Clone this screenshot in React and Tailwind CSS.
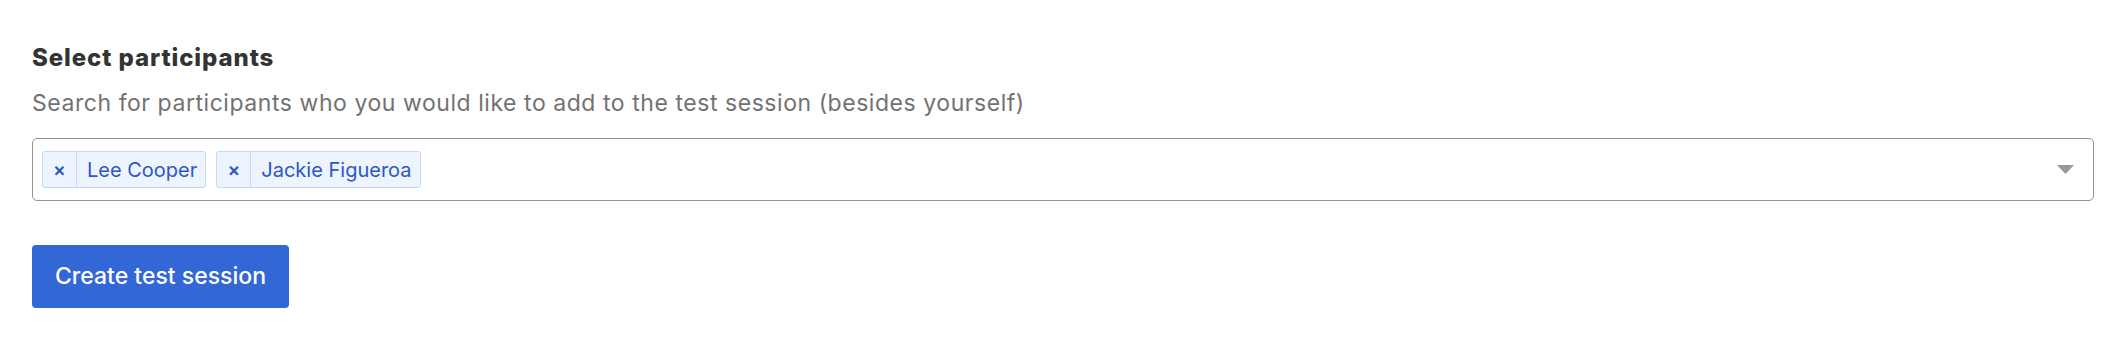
import React from 'react'

const participants = ['Lee Cooper', 'Jackie Figueroa']

function Chip({ name }) {
  return (
    <div className="flex h-[37px] items-stretch rounded-[3px] border border-[#c5d8f6] bg-[#eef4fe] text-[#2c57c4]">
      <button className="flex w-[34px] items-center justify-center border-r border-[#c5d8f6] text-[19px] font-semibold leading-none">
        ×
      </button>
      <span className="flex items-center pl-[10px] pr-[8px] text-[20px]">{name}</span>
    </div>
  )
}

export default function App() {
  return (
    <div className="min-h-[340px] bg-white px-[32px] pt-[44px] font-['Inter',sans-serif]">
      <h2 className="text-[24px] font-extrabold leading-[28px] tracking-[0.9px] text-[#333333]">Select participants</h2>
      <p className="mt-[17px] text-[23px] leading-[28px] tracking-[0.55px] text-[#727272]">
        Search for participants who you would like to add to the test session (besides yourself)
      </p>

      <div className="mt-[21px] flex h-[63px] items-center rounded-[5px] border border-[#949494] pl-[9px] pr-[19px]">
        <div className="flex flex-1 gap-[10px]">
          {participants.map((p) => (
            <Chip key={p} name={p} />
          ))}
        </div>
        <svg width="17" height="9" viewBox="0 0 17 9" className="mb-[1px]">
          <path d="M0 0 H17 L8.5 9 Z" fill="#999999" />
        </svg>
      </div>

      <button className="mt-[44px] h-[63px] rounded-[4px] bg-[#3367d6] px-[23px] text-[23px] font-medium text-white">
        Create test session
      </button>
    </div>
  )
}
